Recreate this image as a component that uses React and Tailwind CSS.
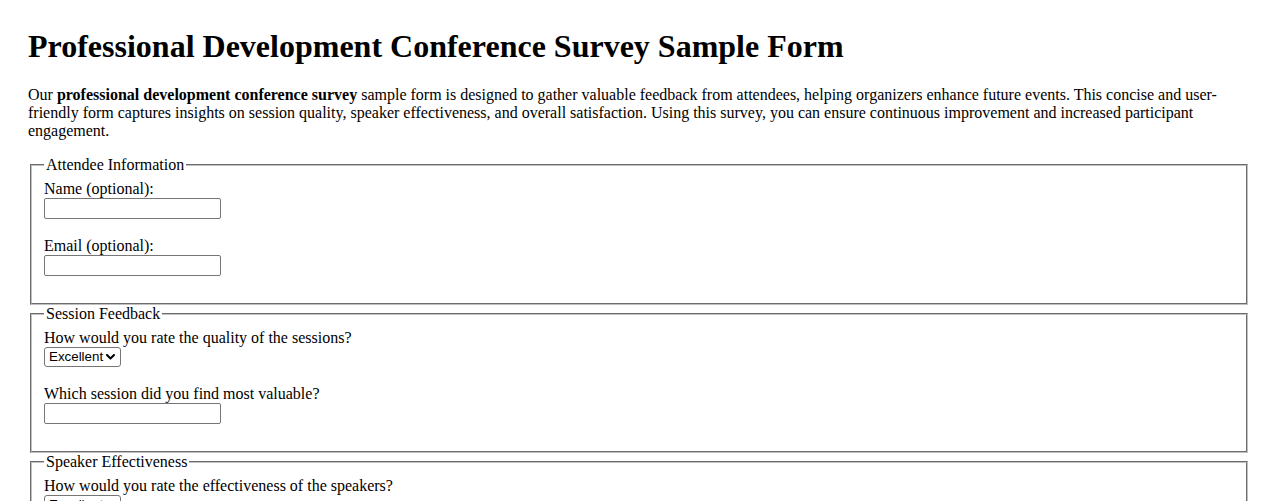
import React from "react";

function TextInput() {
  return (
    <input
      type="text"
      className="inline-block w-[177px] h-[21px] border border-[#767676] rounded-[2px] bg-white px-[2px] font-['Liberation_Sans',Arial,sans-serif] text-[13.333px] align-baseline"
    />
  );
}

function Select({ value }) {
  return (
    <span className="relative inline-block align-baseline">
      <select
        defaultValue={value}
        className="appearance-none w-[77px] h-[20px] border border-[#767676] rounded-[3px] bg-white pl-[4px] pr-[10px] font-['Liberation_Sans',Arial,sans-serif] text-[13.333px] leading-[normal] text-black"
      >
        <option>Excellent</option>
        <option>Good</option>
        <option>Average</option>
        <option>Poor</option>
      </select>
      <svg
        className="absolute right-[6px] top-[7px] pointer-events-none"
        width="9"
        height="6"
        viewBox="0 0 9 6"
        fill="none"
      >
        <path d="M1 1 L4.5 4.5 L8 1" stroke="#000" strokeWidth="2" strokeLinecap="round" strokeLinejoin="round" />
      </svg>
    </span>
  );
}

function Group({ label, children, select }) {
  return (
    <div className={select ? "mb-[18px]" : "mb-[17.5px]"}>
      <label className="block">{label}</label>
      {children}
    </div>
  );
}

function Fieldset({ legend, children }) {
  return (
    <fieldset className="mx-[2px] border-2 [border-style:groove] border-[#c0c0c0] px-3 pt-[5.6px] pb-[10px] min-w-0">
      <legend className="px-[2px]">{legend}</legend>
      {children}
    </fieldset>
  );
}

export default function App() {
  return (
    <div className="bg-white text-black font-['Liberation_Serif','Times_New_Roman',serif] text-[16px] leading-[normal] px-7 pt-7 pb-7 min-h-screen">
      <h1 className="text-[32px] font-bold leading-[normal] mb-[21.44px]">
        Professional Development Conference Survey Sample Form
      </h1>
      <p className="mb-4">
        Our <strong className="font-bold">professional development conference survey</strong> sample form is designed to gather valuable feedback from attendees, helping organizers enhance future events. This concise and user-friendly form captures insights on session quality, speaker effectiveness, and overall satisfaction. Using this survey, you can ensure continuous improvement and increased participant engagement.
      </p>
      <form>
        <Fieldset legend="Attendee Information">
          <Group label="Name (optional):">
            <TextInput />
          </Group>
          <Group label="Email (optional):">
            <TextInput />
          </Group>
        </Fieldset>
        <Fieldset legend="Session Feedback">
          <Group select label="How would you rate the quality of the sessions?">
            <Select value="Excellent" />
          </Group>
          <Group label="Which session did you find most valuable?">
            <TextInput />
          </Group>
        </Fieldset>
        <Fieldset legend="Speaker Effectiveness">
          <Group select label="How would you rate the effectiveness of the speakers?">
            <Select value="Excellent" />
          </Group>
          <Group label="Which speaker did you find most engaging?">
            <TextInput />
          </Group>
        </Fieldset>
      </form>
    </div>
  );
}
